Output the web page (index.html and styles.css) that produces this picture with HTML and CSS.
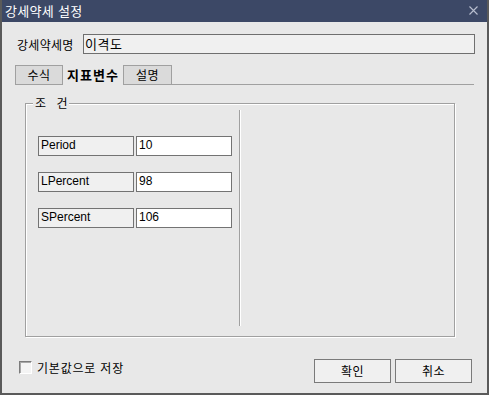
FILE: index.html
```html
<!DOCTYPE html>
<html lang="ko">
<head>
<meta charset="utf-8">
<link rel="stylesheet" href="styles.css">
</head>
<body>
<div class="window">
  <div class="titlebar">
    <span class="title">강세약세 설정</span>
    <svg class="close" width="9" height="9" viewBox="0 0 9 9"><path d="M0.5 0.5 L8.5 8.5 M8.5 0.5 L0.5 8.5" stroke="#b9bfcf" stroke-width="1.1" fill="none"/></svg>
  </div>
  <div class="content">
    <div class="name-row">
      <span class="name-label">강세약세명</span>
      <div class="name-input">이격도</div>
    </div>
    <div class="tabs">
      <div class="tab t1">수식</div>
      <div class="tab active">지표변수</div>
      <div class="tab t3">설명</div>
      <div class="tab-fill"></div>
    </div>
    <div class="group">
      <span class="caption">조 건</span>
      <div class="group-left">
        <div class="field"><div class="flabel">Period</div><div class="fvalue">10</div></div>
        <div class="field"><div class="flabel">LPercent</div><div class="fvalue">98</div></div>
        <div class="field"><div class="flabel">SPercent</div><div class="fvalue">106</div></div>
      </div>
      <div class="sep"></div>
    </div>
    <div class="footer">
      <div class="check"></div>
      <span class="check-label">기본값으로 저장</span>
      <div class="spacer"></div>
      <div class="btn">확인</div>
      <div class="btn">취소</div>
    </div>
  </div>
</div>
</body>
</html>
```
FILE: styles.css
```css
html, body {
  margin: 0;
  padding: 0;
  background: #e8e8e8;
}
body {
  font-family: "Liberation Sans", "Noto Sans CJK KR", sans-serif;
  font-size: 12px;
  color: #000;
}
.window {
  width: 489px;
  height: 395px;
  box-sizing: border-box;
  border: 2px solid #5a5a5a;
  border-top: 0;
  background: #e8e8e8;
  display: flex;
  flex-direction: column;
}
.titlebar {
  height: 22px;
  background: #3c4866;
  color: #fff;
  display: flex;
  align-items: center;
  justify-content: space-between;
  padding: 0 9px 0 3px;
  font-size: 13px;
}
.title {
  line-height: 22px;
  font-family: "Noto Sans CJK KR", sans-serif;
  letter-spacing: 0.3px;
}
.close {
  display: block;
  margin-top: -1px;
}
.content {
  display: flex;
  flex-direction: column;
}
.name-row {
  display: flex;
  align-items: center;
  margin-top: 12px;
  padding-left: 15px;
}
.name-label {
  width: 66px;
  flex-shrink: 0;
  white-space: nowrap;
  font-size: 12px;
  letter-spacing: 0.3px;
  font-family: "Noto Sans CJK KR", sans-serif;
}
.name-input {
  width: 392px;
  height: 20px;
  box-sizing: border-box;
  border: 1px solid #6f6f6f;
  background: #f0f0f0;
  font-size: 13px;
  line-height: 17px;
  padding-left: 1px;
  letter-spacing: 0.5px;
  font-family: "Noto Sans CJK KR", sans-serif;
}
.tabs {
  display: flex;
  margin: 11px 13px 0 13px;
  height: 20px;
}
.tab {
  box-sizing: border-box;
  height: 20px;
  border: 1px solid #a0a0a0;
  background: #dadada;
  text-align: center;
  line-height: 17px;
  font-family: "Noto Sans CJK KR", sans-serif;
  font-size: 12px;
  letter-spacing: 0.5px;
}
.t1 { width: 48px; }
.t3 { width: 49px; }
.tab.active {
  width: 60px;
  border: 0;
  background: #e8e8e8;
  font-weight: bold;
  font-size: 13px;
  line-height: 19px;
  letter-spacing: 1px;
}
.tab-fill {
  flex: 1;
  border-bottom: 1px solid #a0a0a0;
}
.group {
  position: relative;
  margin: 18px 0 0 23px;
  width: 430px;
  height: 234px;
  box-sizing: border-box;
  border: 1px solid #a0a0a0;
  box-shadow: inset 1px 1px 0 #fff, 1px 1px 0 #fff;
  display: flex;
  align-items: flex-start;
}
.caption {
  position: absolute;
  top: -8px;
  left: 7px;
  padding: 0 2px;
  background: #e8e8e8;
  line-height: 14px;
  font-family: "Noto Sans CJK KR", sans-serif;
  font-size: 12px;
  word-spacing: 7px;
}
.group-left {
  width: 213px;
  box-sizing: border-box;
  padding: 32px 0 0 12px;
  display: flex;
  flex-direction: column;
  gap: 16px;
}
.field {
  display: flex;
  gap: 2px;
}
.flabel, .fvalue {
  width: 96px;
  height: 20px;
  box-sizing: border-box;
  border: 1px solid #737373;
  padding-left: 2px;
  line-height: 16px;
  font-size: 12px;
}
.flabel { background: #f0f0f0; }
.fvalue { background: #fff; }
.sep {
  width: 1px;
  height: 216px;
  margin-top: 6px;
  background: #a0a0a0;
  box-shadow: 1px 0 0 #fff;
}
.footer {
  display: flex;
  align-items: flex-start;
  margin-top: 22px;
  padding: 0 15px 0 17px;
}
.check {
  width: 13px;
  height: 13px;
  box-sizing: border-box;
  margin-top: 2px;
  border-top: 1px solid #7c7c7c;
  border-left: 1px solid #7c7c7c;
  border-right: 1px solid #fff;
  border-bottom: 1px solid #fff;
  background: #f4f4f4;
  box-shadow: inset 1px 1px 0 #a8a8a8;
}
.check-label {
  margin-left: 5px;
  line-height: 17px;
  font-family: "Noto Sans CJK KR", sans-serif;
  font-size: 12px;
  letter-spacing: 0.8px;
}
.spacer { flex: 1; }
.btn {
  width: 77px;
  height: 24px;
  box-sizing: border-box;
  border: 1px solid #7a7a7a;
  background: #f0f0f0;
  text-align: center;
  line-height: 22px;
  font-family: "Noto Sans CJK KR", sans-serif;
  font-size: 12px;
  letter-spacing: 0.5px;
}
.btn + .btn { margin-left: 4px; }
```
